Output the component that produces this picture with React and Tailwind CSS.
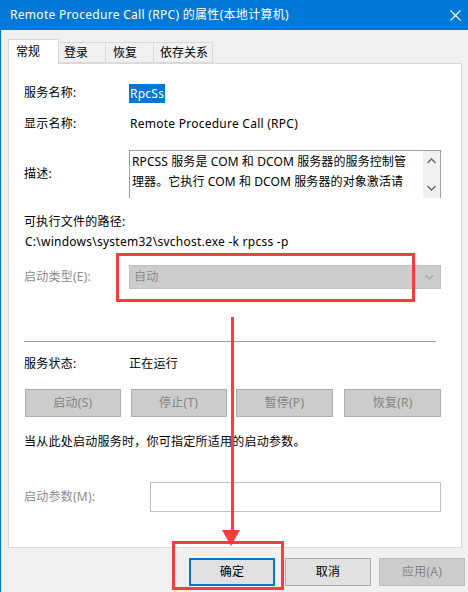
export default function App() {
  const font = { fontFamily: '"Noto Sans", "Noto Sans CJK SC", sans-serif' };

  const Chevron = ({ up, color = '#606060' }) => (
    <svg width="9" height="6" viewBox="0 0 9 6">
      <path d={up ? 'M0.5 5 L4.5 1 L8.5 5' : 'M0.5 1 L4.5 5 L8.5 1'} fill="none" stroke={color} strokeWidth="1.3" />
    </svg>
  );

  return (
    <div className="relative w-[468px] h-[592px] overflow-hidden bg-[#f0f0f0] border-l border-[#0078d7] text-[12px] tracking-[0.25px] text-black" style={font}>
      {/* title bar */}
      <div className="h-[30px] bg-[#0078d7] flex items-center justify-between pl-[9px] pr-[6px] text-white text-[12px] tracking-[0.3px]">
        <span>Remote Procedure Call (RPC) 的属性(本地计算机)</span>
        <svg width="11" height="11" viewBox="0 0 11 11" className="mr-[1px]">
          <path d="M0.5 0.5 L10.5 10.5 M10.5 0.5 L0.5 10.5" stroke="#fff" strokeWidth="1.1" />
        </svg>
      </div>

      {/* tabs */}
      <div className="ml-[7px] mt-[9px] flex items-end h-[24px] tracking-normal">
        <div className="h-[25px] w-[51px] bg-white border border-b-0 border-[#d9d9d9] pl-[7px] pt-[3px] relative z-10 -mb-px">常规</div>
        <div className="h-[21px] w-[47px] bg-[#f0f0f0] border border-l-0 border-[#d9d9d9] pl-[5px] pt-[1px]">登录</div>
        <div className="h-[21px] w-[48px] bg-[#f0f0f0] border border-l-0 border-[#d9d9d9] pl-[7px] pt-[1px]">恢复</div>
        <div className="h-[21px] w-[59px] bg-[#f0f0f0] border border-l-0 border-[#d9d9d9] pl-[6px] pt-[1px]">依存关系</div>
      </div>

      {/* panel */}
      <div className="ml-[7px] w-[454px] h-[485px] bg-white border border-[#d9d9d9] pl-[15px] pr-[20px]">
        <div className="mt-[19px] h-[20px] flex items-center">
          <span className="w-[105px]">服务名称:</span>
          <span className="bg-[#0078d7] text-white px-[1px] h-[19px] leading-[19px]">RpcSs</span>
        </div>
        <div className="mt-[11px] h-[20px] flex items-center">
          <span className="w-[106px]">显示名称:</span>
          <span>Remote Procedure Call (RPC)</span>
        </div>
        <div className="mt-[16px] h-[48px] flex items-center">
          <span className="w-[105px]">描述:</span>
          <div className="flex w-[312px] h-[48px] border border-b-0 border-[#a0a0a0]">
            <div className="flex-1 pl-[2px] pt-[1px] leading-[20px] tracking-[0.1px] whitespace-nowrap">
              <div>RPCSS 服务是 COM 和 DCOM 服务器的服务控制管</div>
              <div>理器。它执行 COM 和 DCOM 服务器的对象激活请</div>
            </div>
            <div className="w-[17px] bg-[#f0f0f0] flex flex-col items-center justify-between pt-[7px] pb-[7px]">
              <Chevron up />
              <Chevron />
            </div>
          </div>
        </div>
        <div className="mt-[14px] h-[20px] flex items-center">可执行文件的路径:</div>
        <div className="h-[20px] flex items-center pl-[1px]">C:\windows\system32\svchost.exe -k rpcss -p</div>
        <div className="mt-[13px] h-[24px] flex items-center">
          <span className="w-[105px] text-[#8c8c8c]">启动类型(E):</span>
          <div className="w-[312px] h-[24px] bg-[#cccccc] border border-[#bfbfbf] flex items-center justify-between pl-[4px] pr-[6px] text-[#8a8a8a]">
            <span>自动</span>
            <Chevron color="#a8a8a8" />
          </div>
        </div>
        <div className="mt-[52px] h-px bg-[#a0a0a0] w-[412px]" />
        <div className="mt-[12px] h-[20px] flex items-center">
          <span className="w-[105px]">服务状态:</span>
          <span>正在运行</span>
        </div>
        <div className="mt-[15px] flex text-[#838383]">
          <div className="ml-[1px] w-[96px] h-[28px] bg-[#cccccc] border border-[#adadad] flex items-center justify-center">启动(S)</div>
          <div className="ml-[10px] w-[96px] h-[28px] bg-[#cccccc] border border-[#adadad] flex items-center justify-center">停止(T)</div>
          <div className="ml-[9px] w-[98px] h-[28px] bg-[#cccccc] border border-[#adadad] flex items-center justify-center">暂停(P)</div>
          <div className="ml-[11px] w-[97px] h-[28px] bg-[#cccccc] border border-[#adadad] flex items-center justify-center">恢复(R)</div>
        </div>
        <div className="mt-[15px] h-[20px] flex items-center">当从此处启动服务时，你可指定所适用的启动参数。</div>
        <div className="mt-[30px] h-[30px] flex items-center">
          <span className="w-[126px] text-[#8c8c8c]">启动参数(M):</span>
          <div className="w-[291px] h-[30px] border border-[#c0c0c0] bg-white" />
        </div>
      </div>

      {/* bottom buttons */}
      <div className="mt-[10px] flex">
        <div className="ml-[188px] w-[86px] h-[28px] bg-[#e1e1e1] border-2 border-[#0078d7] flex items-center justify-center">确定</div>
        <div className="ml-[10px] w-[86px] h-[28px] bg-[#e1e1e1] border border-[#adadad] flex items-center justify-center">取消</div>
        <div className="ml-[8px] w-[86px] h-[28px] bg-[#cccccc] border border-[#bfbfbf] flex items-center justify-center text-[#838383]">应用(A)</div>
      </div>

      {/* red annotations */}
      <div className="absolute left-[115px] top-[253px] w-[299px] h-[49px] border-[3px] border-[#ff3b3b]" />
      <div className="absolute left-[171px] top-[541px] w-[112px] h-[49px] border-[3px] border-[#ff3b3b]" />
      <div className="absolute left-[230px] top-[317px] w-[3px] h-[216px] bg-[#ff3b3b]" />
      <svg className="absolute left-[221px] top-[530px]" width="18" height="16" viewBox="0 0 18 16">
        <path d="M0 0 L18 0 L9 16 Z" fill="#ff3b3b" />
      </svg>
    </div>
  );
}
